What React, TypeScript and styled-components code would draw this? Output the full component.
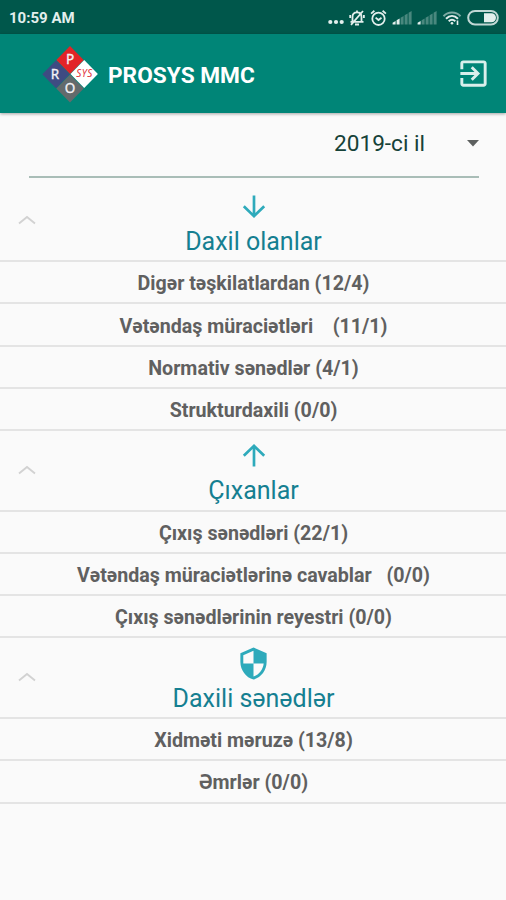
import React from "react";
import styled, { createGlobalStyle } from "styled-components";

const Global = createGlobalStyle`
  * { box-sizing: border-box; }
  html, body { margin: 0; background: #fafafa; }
  body { font-family: Roboto, "Noto Sans", sans-serif; overflow: hidden; }
`;

const Screen = styled.div`
  width: 506px;
  height: 900px;
  display: flex;
  flex-direction: column;
  background: #fafafa;
`;

const StatusBar = styled.div`
  height: 34px;
  flex: none;
  display: flex;
  align-items: center;
  justify-content: space-between;
  padding: 2px 6px 0 9px;
  background: #00574b;
  color: #e3efed;
`;

const Clock = styled.span`
  font-size: 15px;
  line-height: 18px;
  font-weight: 700;
`;

const StatusIcons = styled.div`
  display: flex;
  align-items: center;
  gap: 5px;
  margin-right: 1px;
  svg { display: block; }
`;

const AppBar = styled.header`
  height: 79px;
  flex: none;
  display: flex;
  align-items: center;
  padding: 0 15px 0 42px;
  background: #008577;
  color: #fff;
  box-shadow: 0 1px 3px rgba(0, 0, 0, 0.35);
`;

const Title = styled.h1`
  flex: 1;
  margin: 5px 0 0 10px;
  font-size: 22.7px;
  line-height: 28px;
  font-weight: 700;
`;

const Logo = styled.svg`
  display: block;
  font-family: "Noto Sans", sans-serif;
`;

const YearSelect = styled.div`
  height: 65px;
  flex: none;
  margin: 0 27px 0 29px;
  padding-bottom: 2px;
  display: flex;
  align-items: center;
  justify-content: flex-end;
  border-bottom: 2px solid #a9bdb7;
  color: #164238;
  font-size: 22.6px;
  line-height: 28px;
  svg { display: block; margin: -1px 0 0 42px; }
`;

const List = styled.main`
  padding-top: 3.3px;
`;

const GroupHeader = styled.div`
  height: 81px;
  display: grid;
  grid-template-columns: 53px 1fr 53px;
  align-items: center;
  border-bottom: 2px solid #e4e4e4;
  > svg { display: block; margin: -1px 0 0 18px; }
`;

const GroupTitle = styled.div`
  display: flex;
  flex-direction: column;
  align-items: center;
  padding: 7px 0 0 1px;
  color: #157f91;
  font-size: 25px;
  line-height: 34px;
  svg { display: block; height: 35px; margin: -1px 0 1px; color: #2eaabb; }
`;

const Row = styled.div`
  height: 42.15px;
  display: flex;
  align-items: center;
  justify-content: center;
  padding: 4px 0 0 1px;
  border-bottom: 2px solid #e4e4e4;
  color: #606060;
  font-size: 19.65px;
  line-height: 24px;
  font-weight: 700;
  white-space: pre;
`;

const MoreIcon = () => (
  <svg width="16" height="18" fill="currentColor">
    <circle cx="2.3" cy="13" r="2.1" />
    <circle cx="8" cy="13" r="2.1" />
    <circle cx="13.7" cy="13" r="2.1" />
  </svg>
);

const MutedIcon = () => (
  <svg width="16" height="18" fill="none" stroke="currentColor" strokeWidth="1.8">
    <path d="M1.5 12.8h13M3.500 12.400V8c0-3 1.800-4.600 4.500-4.600s4.500 1.600 4.500 4.600v4.400M6 15.500h4M14 2L2 15.800M1.200 6v3M14.900 6v3M8 1.500v2" />
  </svg>
);

const AlarmIcon = () => (
  <svg width="17" height="18" fill="none" stroke="currentColor" strokeWidth="1.8">
    <circle cx="8.5" cy="9.8" r="6.2" />
    <path d="M5.600 8.600l2.900 2.400 3-2.200M1.100 4.600l3.300-2.800M15.900 4.600l-3.300-2.800" />
  </svg>
);

const SignalIcon = ({ bars }: { bars: number }) => (
  <svg width="20" height="18" fill="currentColor">
    {[0, 1, 2, 3, 4].map((i) => (
      <path
        key={i}
        opacity={i < bars ? 1 : 0.32}
        d={`M${i * 4 + 0.6} 15.500v-${1.8 + i * 2.5}l3-1.600v${3.4 + i * 2.5}z`}
      />
    ))}
  </svg>
);

const WifiIcon = () => (
  <svg width="20" height="18" fill="none" stroke="currentColor" strokeWidth="2">
    <path d="M1.500 7.200c4.800-4.800 12.200-4.800 17 0" opacity=".55" />
    <path d="M4 9.700c3.600-3.500 8.400-3.500 12 0M6.700 12.300c2-1.900 4.600-1.900 6.600 0" />
    <circle cx="10" cy="14.3" r="1.3" fill="currentColor" stroke="none" />
    <path d="M15.500 11.500v4.500" strokeWidth="1.6" />
  </svg>
);

const BatteryIcon = () => (
  <svg width="32" height="18" fill="none" stroke="currentColor">
    <rect x="1.2" y="1.9" width="29.6" height="13.6" rx="6.8" strokeWidth="2" opacity=".85" />
    <path d="M17 4.200h7.500a4.500 4.500 0 0 1 0 9H17z" fill="currentColor" stroke="none" />
  </svg>
);

const ProsysLogo = () => (
  <Logo width="56" height="58" viewBox="0 0 56 58" textAnchor="middle">
    <path d="M28 1l13.700 14L28 29 14.300 15z" fill="#e22427" />
    <path d="M14 15.300l13.700 14L14 43.300.300 29.300z" fill="#3f4b82" />
    <path d="M42.200 15l13.700 14-13.700 14-13.700-14z" fill="#fff" />
    <path d="M28 29.400l13.700 14-13.700 14-13.700-14z" fill="#636a6c" />
    <g fill="#f4f1f5" fontSize="13.5" stroke="#f4f1f5" strokeWidth=".3">
      <text x="28" y="18.500">P</text>
      <text x="13" y="33.500">R</text>
      <text x="28" y="47.500">O</text>
    </g>
    <text x="42.3" y="32.200" fill="#e2343c" fontSize="10" fontStyle="italic" textLength="16">SYS</text>
  </Logo>
);

const ExitIcon = () => (
  <svg width="35" height="35" viewBox="0 0 24 24" fill="#d9efec">
    <path d="M10.090 15.590L11.500 17l5-5-5-5-1.410 1.410L12.670 11H3v2h9.670l-2.580 2.590zM19 3H5c-1.110 0-2 .9-2 2v4h2V5h14v14H5v-4H3v4c0 1.100.890 2 2 2h14c1.100 0 2-.9 2-2V5c0-1.100-.9-2-2-2z" />
  </svg>
);

const Caret = () => (
  <svg width="12" height="7" fill="#5d605f">
    <path d="M0 0h12L6 6.500z" />
  </svg>
);

const Chevron = () => (
  <svg width="18" height="10" fill="none" stroke="#d2d2d2" strokeWidth="1.9">
    <path d="M1 8.500l8-6.500 8 6.500" />
  </svg>
);

const Arrow = ({ up }: { up?: boolean }) => (
  <svg width="24" height="35" fill="none" stroke="currentColor" strokeWidth="2.7">
    <path d={up ? "M12 28.500V8M1.800 17.800L12 7.800l10.200 10" : "M12 6.500V27M1.800 17.200L12 27.200l10.200-10"} />
  </svg>
);

const Shield = () => (
  <svg width="35" height="35" viewBox="0 0 24 24" fill="currentColor">
    <path d="M12 1L3 5v6c0 5.550 3.840 10.740 9 12 5.160-1.260 9-6.450 9-12V5l-9-4zm0 10.990h7c-.530 4.120-3.280 7.790-7 8.940V12H5V6.300l7-3.110v8.800z" />
  </svg>
);

const groups = [
  {
    title: "Daxil olanlar",
    icon: <Arrow />,
    rows: ["Digər təşkilatlardan (12/4)", "Vətəndaş müraciətləri    (11/1)", "Normativ sənədlər (4/1)", "Strukturdaxili (0/0)"],
  },
  {
    title: "Çıxanlar",
    icon: <Arrow up />,
    rows: ["Çıxış sənədləri (22/1)", "Vətəndaş müraciətlərinə cavablar   (0/0)", "Çıxış sənədlərinin reyestri (0/0)"],
  },
  {
    title: "Daxili sənədlər",
    icon: <Shield />,
    rows: ["Xidməti məruzə (13/8)", "Əmrlər (0/0)"],
  },
];

export default function App() {
  return (
    <Screen>
      <Global />
      <StatusBar>
        <Clock>10:59 AM</Clock>
        <StatusIcons>
          <MoreIcon />
          <MutedIcon />
          <AlarmIcon />
          <SignalIcon bars={2} />
          <SignalIcon bars={1} />
          <WifiIcon />
          <BatteryIcon />
        </StatusIcons>
      </StatusBar>
      <AppBar>
        <ProsysLogo />
        <Title>PROSYS MMC</Title>
        <ExitIcon />
      </AppBar>
      <YearSelect>
        2019-ci il
        <Caret />
      </YearSelect>
      <List>
        {groups.map((g) => (
          <section key={g.title}>
            <GroupHeader>
              <Chevron />
              <GroupTitle>
                {g.icon}
                <span>{g.title}</span>
              </GroupTitle>
            </GroupHeader>
            {g.rows.map((r) => (
              <Row key={r}>{r}</Row>
            ))}
          </section>
        ))}
      </List>
    </Screen>
  );
}
